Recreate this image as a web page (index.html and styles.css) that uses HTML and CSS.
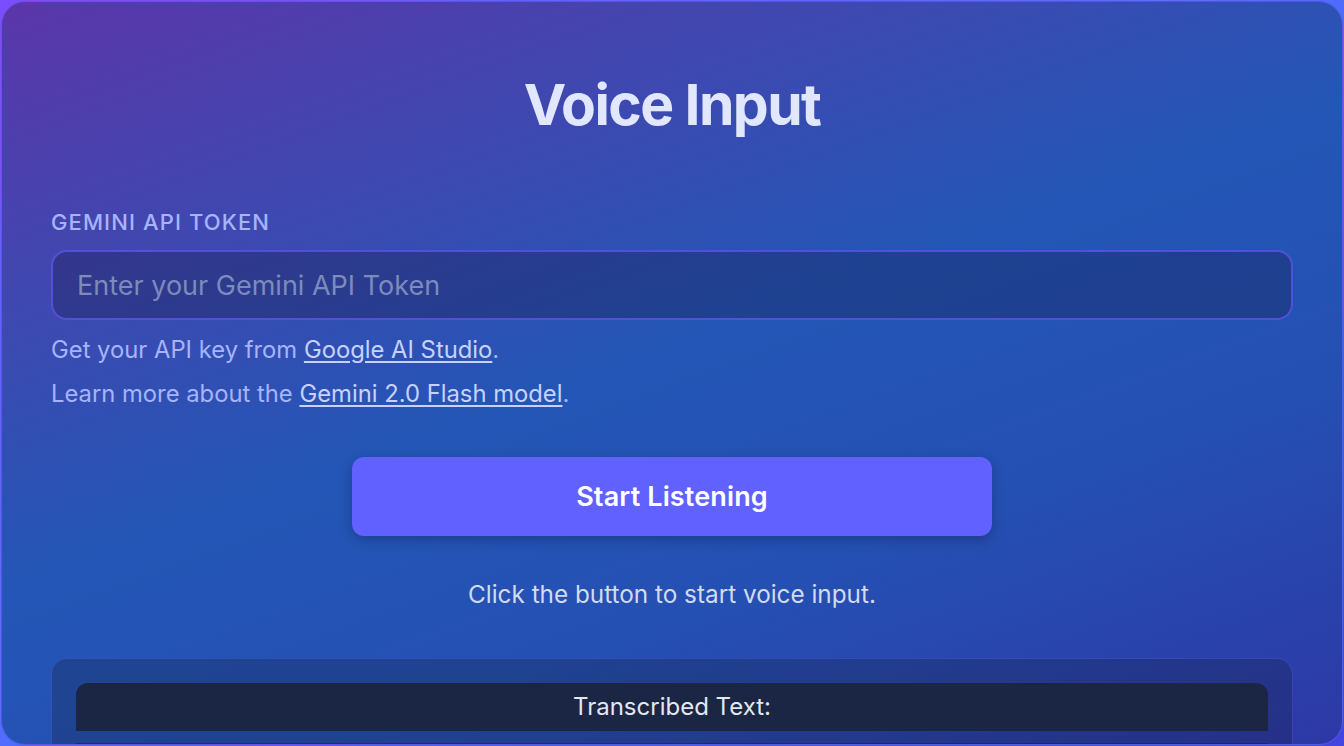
FILE: index.html
```html
<!DOCTYPE html>
<html lang="en">
<head>
<meta charset="utf-8">
<title>Voice Input</title>
<link rel="stylesheet" href="styles.css">
</head>
<body>
<main class="card">
  <h1 class="title">Voice Input</h1>
  <label class="field-label" for="token">Gemini API Token</label>
  <input id="token" class="token-input" type="password" placeholder="Enter your Gemini API Token">
  <p class="help">Get your API key from <a href="#">Google AI Studio</a>.</p>
  <p class="help">Learn more about the <a href="#">Gemini 2.0 Flash model</a>.</p>
  <div class="actions">
    <button class="listen-btn" type="button">Start Listening</button>
  </div>
  <p class="status">Click the button to start voice input.</p>
  <section class="output">
    <div class="output-inner">
      <h2 class="output-title">Transcribed Text:</h2>
      <div class="output-body"></div>
    </div>
  </section>
</main>
</body>
</html>
```

FILE: styles.css
```css
* { box-sizing: border-box; }

html, body {
  margin: 0;
  height: 100%;
  overflow: hidden;
}

body {
  font-family: Inter, "Noto Sans", sans-serif;
  background: linear-gradient(150deg, #7c4cff 0%, #5a6cff 45%, #3a6cff 60%, #4444e0 100%);
  padding: 1px;
}

.card {
  height: 744px;
  border: 1px solid rgba(110, 110, 255, 0.55);
  border-radius: 24px;
  overflow: hidden;
  padding: 0 49px;
  background: linear-gradient(160deg, #5b36a9 0%, #3f48b0 25%, #2356b6 48%, #2550b3 70%, #2d38a6 100%);
}

.title {
  margin: 70px 0 0;
  text-align: center;
  font-size: 57px;
  line-height: 66px;
  font-weight: 700;
  letter-spacing: -0.028em;
  color: #e0e7ff;
}

.field-label {
  display: block;
  margin-top: 72px;
  font-size: 22px;
  line-height: 24px;
  font-weight: 500;
  letter-spacing: 0.05em;
  text-transform: uppercase;
  color: #a5b4fc;
}

.token-input {
  display: block;
  width: 100%;
  height: 70px;
  margin-top: 16px;
  padding: 0 24px;
  border: 2px solid rgba(95, 85, 235, 0.8);
  border-radius: 16px;
  background: rgba(20, 20, 60, 0.3);
  font-family: inherit;
  font-size: 27px;
  color: #e0e7ff;
  outline: none;
}

.token-input::placeholder {
  color: #7b8bbd;
}

.help {
  margin: 16px 0 0;
  font-size: 23.8px;
  line-height: 28px;
  color: #a5b4fc;
}

.help a {
  color: #c7d2fe;
  text-decoration: underline;
  text-underline-offset: 3px;
}

.actions {
  display: flex;
  justify-content: center;
  margin-top: 49px;
}

.listen-btn {
  width: 640px;
  height: 79px;
  border: none;
  border-radius: 12px;
  background: #6161ff;
  color: #ffffff;
  font-family: inherit;
  font-size: 27px;
  font-weight: 600;
  letter-spacing: 0.005em;
  box-shadow: 0 4px 12px rgba(10, 20, 60, 0.3);
}

.status {
  margin: 43px 0 0;
  text-align: center;
  font-size: 24.3px;
  line-height: 30px;
  color: #d3dbee;
}

.output {
  margin-top: 49px;
  padding: 24px 24px 40px;
  border: 1px solid rgba(99, 102, 241, 0.35);
  border-radius: 16px;
  background: rgba(15, 23, 42, 0.25);
}

.output-inner {
  border-radius: 12px 12px 0 0;
  overflow: hidden;
}

.output-title {
  margin: 0;
  height: 48px;
  line-height: 48px;
  text-align: center;
  font-size: 24px;
  font-weight: 400;
  color: #e2e8f0;
  background: #1b2544;
}

.output-body {
  height: 120px;
  margin-top: 12px;
  background: rgba(15, 23, 42, 0.4);
}
```
